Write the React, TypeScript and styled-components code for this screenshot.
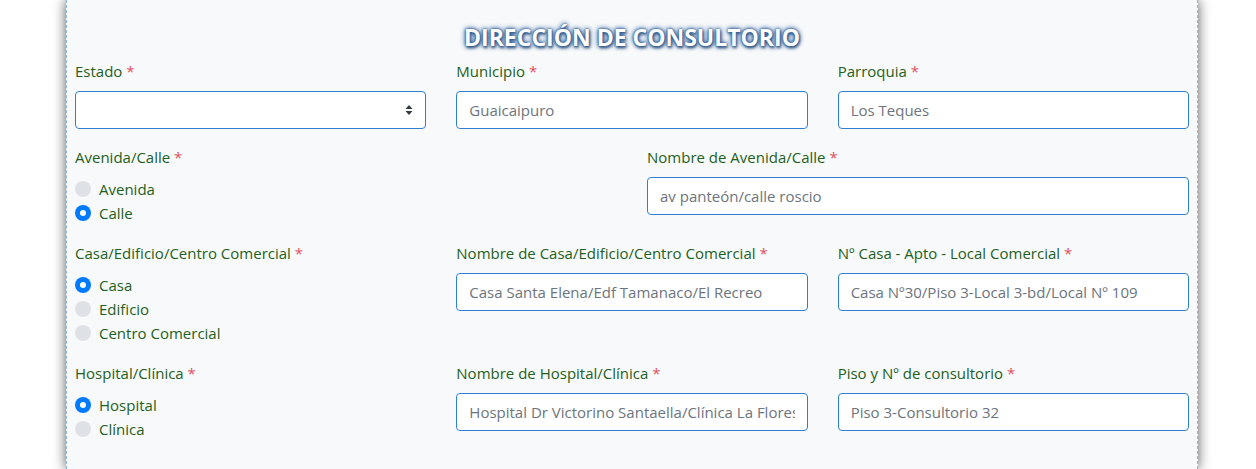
import React from "react";
import styled, { createGlobalStyle } from "styled-components";

const Global = createGlobalStyle`
  html, body { margin: 0; padding: 0; background: #ffffff; }
  body { font-family: "Open Sans", "Noto Sans", sans-serif; font-size: 15px; overflow: hidden; }
  * { box-sizing: border-box; }
`;

const Card = styled.div`
  margin-left: 66px;
  width: 1132px;
  height: 469px;
  background: #f8f9fa;
  border: 1px dashed #8fb6d9;
  border-top: none;
  border-bottom: none;
  box-shadow: 0 0 12px rgba(0, 0, 0, 0.65);
  padding: 21px 8px 0 8px;
`;

const Title = styled.h3`
  margin: 0 0 5px 0;
  text-align: center;
  font-family: "Open Sans", sans-serif;
  font-weight: 700;
  font-size: 23px;
  line-height: 33px;
  color: #ffffff;
  text-shadow: 0 0 2px #1d4f8a, 0 0 4px #2a5d9a, 0 0 6px #5a85b8, 1px 2px 3px #3a4f6a;
`;

const Row = styled.div<{ $cols: number }>`
  display: grid;
  grid-template-columns: repeat(${(p) => p.$cols}, 1fr);
  column-gap: 30px;
  margin-bottom: 16px;
`;

const Field = styled.div`
  display: flex;
  flex-direction: column;
`;

const Label = styled.label`
  color: #1f5f22;
  line-height: 24px;
  margin-bottom: 8px;
`;

const Req = styled.span`
  color: #e0505e;
`;

const Input = styled.input`
  height: 38px;
  width: 100%;
  border: 1px solid #2f7fd0;
  border-radius: 4px;
  background: #ffffff;
  padding: 0 12px;
  font-family: inherit;
  font-size: 15px;
  color: #495057;
  outline: none;
  &::placeholder { color: #6c757d; }
`;

const SelectBox = styled.div`
  height: 38px;
  width: 100%;
  border: 1px solid #2f7fd0;
  border-radius: 4px;
  background: #ffffff;
  display: flex;
  align-items: center;
  justify-content: flex-end;
  padding-right: 12px;
`;

const RadioList = styled.div`
  display: flex;
  flex-direction: column;
`;

const RadioItem = styled.div`
  display: flex;
  align-items: center;
  height: 24px;
  color: #1f5f22;
`;

const Dot = styled.span<{ $on: boolean }>`
  width: 16px;
  height: 16px;
  border-radius: 50%;
  margin-right: 8px;
  background: ${(p) => (p.$on ? "#007bff" : "#dee2e6")};
  display: flex;
  align-items: center;
  justify-content: center;
  &::after {
    content: "";
    width: 6px;
    height: 6px;
    border-radius: 50%;
    background: ${(p) => (p.$on ? "#ffffff" : "transparent")};
  }
`;

const FieldLabel = ({ text }: { text: string }) => (
  <Label>
    {text} <Req>*</Req>
  </Label>
);

const Radios = ({ items, selected }: { items: string[]; selected: number }) => (
  <RadioList>
    {items.map((t, i) => (
      <RadioItem key={t}>
        <Dot $on={i === selected} />
        {t}
      </RadioItem>
    ))}
  </RadioList>
);

export default function App() {
  return (
    <>
      <Global />
      <Card>
        <Title>DIRECCIÓN DE CONSULTORIO</Title>
        <Row $cols={3}>
          <Field>
            <FieldLabel text="Estado" />
            <SelectBox>
              <svg width="8" height="12" viewBox="0 0 8 12">
                <path d="M4 1 L7.5 5 H0.5 Z M4 11 L0.5 7 H7.5 Z" fill="#343a40" />
              </svg>
            </SelectBox>
          </Field>
          <Field>
            <FieldLabel text="Municipio" />
            <Input placeholder="Guaicaipuro" />
          </Field>
          <Field>
            <FieldLabel text="Parroquia" />
            <Input placeholder="Los Teques" />
          </Field>
        </Row>
        <Row $cols={2}>
          <Field>
            <FieldLabel text="Avenida/Calle" />
            <Radios items={["Avenida", "Calle"]} selected={1} />
          </Field>
          <Field>
            <FieldLabel text="Nombre de Avenida/Calle" />
            <Input placeholder="av panteón/calle roscio" />
          </Field>
        </Row>
        <Row $cols={3}>
          <Field>
            <FieldLabel text="Casa/Edificio/Centro Comercial" />
            <Radios items={["Casa", "Edificio", "Centro Comercial"]} selected={0} />
          </Field>
          <Field>
            <FieldLabel text="Nombre de Casa/Edificio/Centro Comercial" />
            <Input placeholder="Casa Santa Elena/Edf Tamanaco/El Recreo" />
          </Field>
          <Field>
            <FieldLabel text="Nº Casa - Apto - Local Comercial" />
            <Input placeholder="Casa Nº30/Piso 3-Local 3-bd/Local Nº 109" />
          </Field>
        </Row>
        <Row $cols={3}>
          <Field>
            <FieldLabel text="Hospital/Clínica" />
            <Radios items={["Hospital", "Clínica"]} selected={0} />
          </Field>
          <Field>
            <FieldLabel text="Nombre de Hospital/Clínica" />
            <Input placeholder="Hospital Dr Victorino Santaella/Clínica La Floresta" />
          </Field>
          <Field>
            <FieldLabel text="Piso y Nº de consultorio" />
            <Input placeholder="Piso 3-Consultorio 32" />
          </Field>
        </Row>
      </Card>
    </>
  );
}
